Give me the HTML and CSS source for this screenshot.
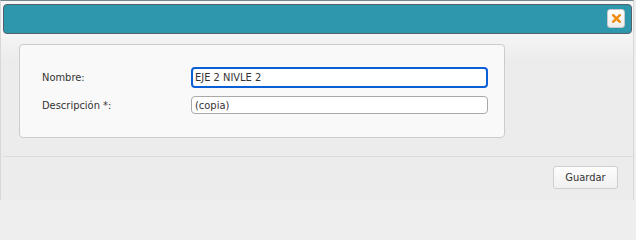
FILE: index.html
```html
<!DOCTYPE html>
<html lang="es">
<head>
<meta charset="utf-8">
<title>Editar</title>
<link rel="stylesheet" href="styles.css">
</head>
<body>
<div class="dialog">
  <div class="titlebar">
    <button class="close" type="button" aria-label="Cerrar">
      <svg width="9" height="9" viewBox="0 0 9 9" aria-hidden="true"><path d="M1.2 1.2 L7.8 7.8 M7.8 1.2 L1.2 7.8" stroke="#f08c0c" stroke-width="2.4" stroke-linecap="square"/></svg>
    </button>
  </div>
  <div class="content">
    <div class="panel">
      <div class="row">
        <label class="label" for="nombre">Nombre:</label>
        <input class="field focused" id="nombre" type="text" value="EJE 2 NIVLE 2">
      </div>
      <div class="row">
        <label class="label" for="desc">Descripción *:</label>
        <input class="field" id="desc" type="text" value="(copia)">
      </div>
    </div>
  </div>
  <div class="separator"></div>
  <div class="footer">
    <button class="btn" type="button">Guardar</button>
  </div>
</div>
</body>
</html>
```

FILE: styles.css
```css
* { box-sizing: border-box; }
html, body { margin: 0; padding: 0; }
body {
  background: #eeeeee;
  font-family: "DejaVu Sans Condensed", "Open Sans", sans-serif;
  font-size: 11px;
  color: #333;
  width: 636px;
  height: 200px;
  overflow: hidden;
}
.dialog {
  width: 634px;
  height: 200px;
  border-left: 1px solid #d8d8d8;
  border-right: 1px solid #d8d8d8;
  border-top: 1px solid #75878d;
  padding-top: 3px;
  background: linear-gradient(#f6f6f6 30px, #ececec 60px, #ececec);
  display: flex;
  flex-direction: column;
}
.titlebar {
  margin: 0 1px 0 2px;
  height: 30px;
  background: #2e97ae;
  border: 1px solid #55606a;
  border-radius: 4px;
  display: flex;
  justify-content: flex-end;
  align-items: flex-start;
  padding: 4px 6px 0 0;
}
.close {
  width: 18px;
  height: 19px;
  padding: 0;
  margin: 0;
  border: 1px solid #c8c8c8;
  border-radius: 3px;
  background: linear-gradient(#ffffff, #eeeeee);
  display: flex;
  align-items: center;
  justify-content: center;
}
.close svg { display: block; }
.content {
  padding: 10px 0 0 18px;
}
.panel {
  width: 486px;
  height: 94px;
  background: #f9f9f9;
  border: 1px solid #cccccc;
  border-radius: 4px;
  padding: 22px 0 0 22px;
  display: flex;
  flex-direction: column;
  gap: 8px;
}
.row {
  display: flex;
  align-items: center;
}
.label {
  width: 149px;
  flex: none;
  color: #333;
}
.field {
  width: 297px;
  height: 18px;
  margin: 0;
  padding: 0 0 0 3px;
  border: 1px solid #a9a9a9;
  border-radius: 4px;
  background: #fff;
  font-family: inherit;
  font-size: 11px;
  color: #333;
  outline: none;
}
.field.focused {
  height: 21px;
  border: 2px solid #0a5fd6;
  padding-left: 2px;
}
.separator {
  margin: 18px 0 0 2px;
  height: 1px;
  background: #dcdcdc;
}
.footer {
  display: flex;
  justify-content: flex-end;
  padding: 9px 15px 0 0;
}
.btn {
  width: 65px;
  height: 23px;
  margin: 0;
  padding: 0;
  border: 1px solid #cfcfcf;
  border-radius: 3px;
  background: linear-gradient(#fdfdfd, #f0f0f0);
  font-family: inherit;
  font-size: 11px;
  color: #333;
}
```
